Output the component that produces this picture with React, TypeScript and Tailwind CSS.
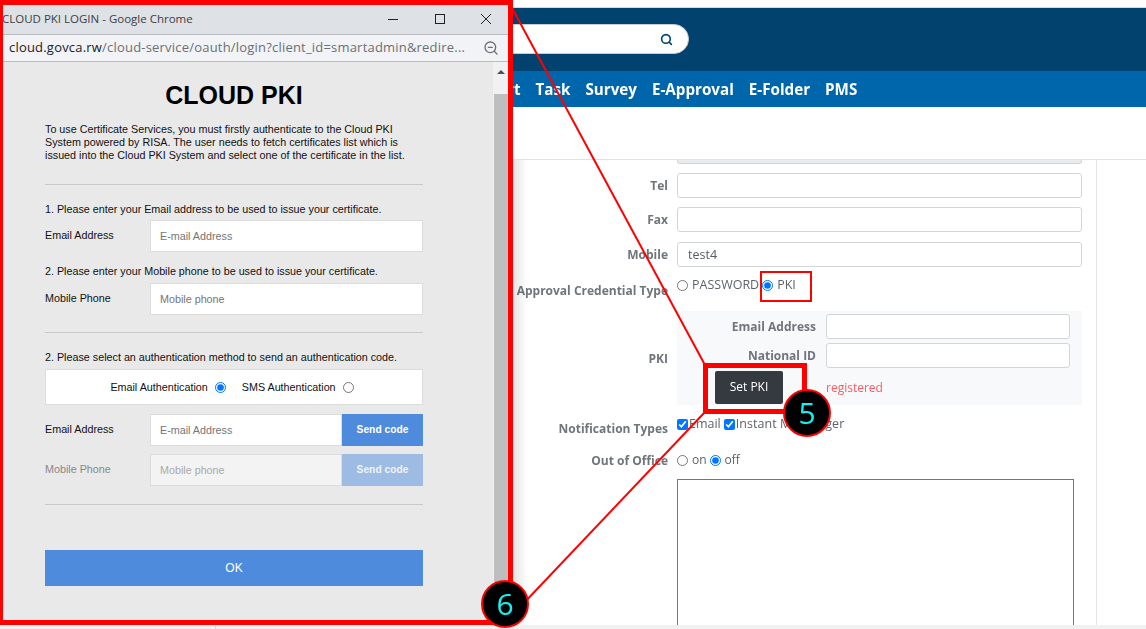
import { Search, ZoomOut } from "lucide-react";

const sans = "font-['Open_Sans',_'Noto_Sans',_sans-serif]";
const arial = "font-['Liberation_Sans',_Arial,_sans-serif]";

function Row({ label, className, labelClass = "", children }: { label: string; className: string; labelClass?: string; children?: React.ReactNode }) {
  return (
    <div className={`flex shrink-0 gap-[9px] ${className}`}>
      <div className={`w-[668px] shrink-0 text-right text-[12px] font-bold leading-[18px] text-[#6f757b] ${labelClass}`}>{label}</div>
      <div className="w-[405px] shrink-0 text-[12.5px] leading-[18px] text-[#5d6369]">{children}</div>
    </div>
  );
}

function Field({ value = "", className = "" }: { value?: string; className?: string }) {
  return (
    <div className={`h-[25px] rounded-[3px] border border-[#d3d6d9] bg-white px-[10px] text-[12.5px] leading-[23px] text-[#555c62] ${className}`}>
      {value}
    </div>
  );
}

function Background() {
  return (
    <div className={`flex h-[629px] w-[1146px] flex-col bg-white ${sans}`}>
      <div className="h-[8px] shrink-0 border-b border-[#d5d9dc] bg-white" />
      <header className="flex h-[63px] shrink-0 items-start justify-end bg-[#01426f] pr-[457px] pt-[16px]">
        <div className="flex h-[30px] w-[300px] items-center justify-end rounded-full border border-[#c6ccd2] bg-white pr-[15px]">
          <Search size={13} strokeWidth={3} className="text-[#01426f]" />
        </div>
      </header>
      <nav className="flex h-[36px] shrink-0 items-center gap-[15px] bg-[#0066ac] pl-[469px] text-[15.2px] font-bold text-white">
        <span>Report</span>
        <span>Task</span>
        <span>Survey</span>
        <span>E-Approval</span>
        <span>E-Folder</span>
        <span>PMS</span>
      </nav>
      <div className="h-[53px] shrink-0 border-b border-[#dfe2e5] bg-white" />
      <main className="relative min-h-0 flex-1 overflow-hidden">
        <div className="mr-[49px] flex h-full flex-col border-r border-[#e3e5e7]">
          <div className="ml-[677px] h-[4px] w-[405px] shrink-0 rounded-b-[3px] border border-t-0 border-[#d3d6d9] bg-[#e9ecef]" />
          <Row label="Tel" className="mt-[9px] items-center"><Field /></Row>
          <Row label="Fax" className="mt-[9px] items-center"><Field /></Row>
          <Row label="Mobile" className="mt-[10px] items-center"><Field value="test4" /></Row>
          <Row label="Approval Credential Type" labelClass="pt-[2px]" className="mt-[13px] h-[31px] items-start">
            <div className="-mt-[4px] flex items-center">
              <input type="radio" name="cred" readOnly className="m-0 mr-[4px] h-[11px] w-[11px]" />
              <span>PASSWORD</span>
              <input type="radio" name="cred" defaultChecked className="m-0 ml-[3px] mr-[4px] h-[11px] w-[11px]" />
              <span>PKI</span>
            </div>
          </Row>
          <Row label="PKI" labelClass="pt-[2px]" className="h-[94px] items-center">
            <div className="flex h-[94px] flex-col bg-[#f8f9fa] pt-[3px]">
              <div className="flex items-center gap-[10px] text-[12px]">
                <div className="w-[139px] text-right font-bold text-[#6f757b]">Email Address</div>
                <Field className="w-[244px]" />
              </div>
              <div className="mt-[4px] flex items-center gap-[10px] text-[12px]">
                <div className="w-[139px] text-right font-bold text-[#6f757b]">National ID</div>
                <Field className="w-[244px]" />
              </div>
              <div className="mt-[3px] flex items-center text-[12px]">
                <button className="ml-[38px] h-[33px] w-[68px] rounded-[2px] bg-[#343a40] pb-[2px] text-[12px] text-white">Set PKI</button>
                <span className="ml-[43px] text-[#ff5b66]">registered</span>
              </div>
            </div>
          </Row>
          <Row label="Notification Types" labelClass="pt-[1px]" className="mt-[14px] h-[18px] items-start">
            <div className="-mt-[4px] flex items-center">
              <input type="checkbox" defaultChecked className="m-0 h-[11px] w-[11px]" />
              <span className="ml-[1px]">Email</span>
              <input type="checkbox" defaultChecked className="m-0 ml-[3px] h-[11px] w-[11px]" />
              <span className="ml-[1px] tracking-[0.05px]">Instant Messenger</span>
            </div>
          </Row>
          <Row label="Out of Office" labelClass="pt-[1px]" className="mt-[14px] h-[19px] items-start">
            <div className="flex items-center text-[12px]">
              <input type="radio" name="office" readOnly className="m-0 mr-[4px] h-[11px] w-[11px]" />
              <span>on</span>
              <input type="radio" name="office" defaultChecked className="m-0 ml-[3px] mr-[4px] h-[11px] w-[11px]" />
              <span>off</span>
            </div>
          </Row>
          <div className="ml-[677px] mt-[9px] h-[200px] w-[397px] shrink-0 border border-[#767676] bg-white" />
        </div>
        <div className="absolute bottom-0 left-[215px] right-0 h-[4px] border-l border-[#d9d9d9] bg-[#f1f1f1]" />
        <div className="absolute bottom-0 left-0 h-[4px] w-[215px] bg-[#f1f1f1]" />
      </main>
    </div>
  );
}

function Popup() {
  const input = "h-[32px] border border-[#dcdcdc] bg-white pl-[9px] text-[10.75px] leading-[30px] text-[#757575]";
  const label = "w-[105px] shrink-0 text-[10.75px] leading-[13px] text-[#111]";
  return (
    <div className="absolute left-0 top-0 flex h-[625px] w-[513px] flex-col border-b-[5px] border-l-[3px] border-r-[5px] border-t-[5px] border-[#ff0000] bg-[#e9e9e9]">
      <div className={`flex h-[29px] shrink-0 items-center bg-[#dee1e6] pb-[2px] text-[11.5px] text-[#3c4043] ${sans}`}>
        <span className="ml-[-1px] flex-1 whitespace-nowrap">CLOUD PKI LOGIN - Google Chrome</span>
        <svg width="120" height="14" viewBox="0 0 120 14" className="shrink-0 text-[#222]" fill="none" stroke="currentColor" strokeWidth="1">
          <path d="M0 7.5H10" />
          <rect x="47.5" y="2.5" width="9" height="9" />
          <path d="M93 2L103 12M103 2L93 12" />
        </svg>
      </div>
      <div className={`flex h-[28px] shrink-0 items-center justify-between border-y border-[#b9bbbe] bg-[#f1f3f6] pl-[6px] pr-[9px] text-[13px] text-[#6c7074] ${sans}`}>
        <span className="w-[462px] overflow-hidden whitespace-nowrap tracking-[0.2px]">
          <span className="text-[#202124]">cloud.govca.rw</span>/cloud-service/oauth/login?client_id=smartadmin&amp;redire...
        </span>
        <ZoomOut size={16} strokeWidth={2} className="shrink-0 text-[#6c7074]" />
      </div>
      <div className="flex min-h-0 flex-1">
        <div className={`min-w-0 flex-1 pl-[42px] pr-[70px] ${arial}`}>
          <h1 className="mt-[17px] text-center text-[25px] font-bold leading-[33px] text-black">CLOUD PKI</h1>
          <p className="mt-[11px] whitespace-nowrap text-[10.75px] leading-[13px] text-[#111]">
            To use Certificate Services, you must firstly authenticate to the Cloud PKI
            <br />
            System powered by RISA. The user needs to fetch certificates list which is
            <br />
            issued into the Cloud PKI System and select one of the certificate in the list.
          </p>
          <hr className="mt-[22px] border-[#c9c9c9]" />
          <p className="mt-[18px] text-[10.75px] leading-[13px] text-[#111]">1. Please enter your Email address to be used to issue your certificate.</p>
          <div className="mt-[4px] flex">
            <div className={`${label} pt-[9px]`}>Email Address</div>
            <div className={`${input} flex-1`}>E-mail Address</div>
          </div>
          <p className="mt-[13px] text-[10.75px] leading-[13px] text-[#111]">2. Please enter your Mobile phone to be used to issue your certificate.</p>
          <div className="mt-[5px] flex">
            <div className={`${label} pt-[9px]`}>Mobile Phone</div>
            <div className={`${input} flex-1`}>Mobile phone</div>
          </div>
          <hr className="mt-[17px] border-[#c9c9c9]" />
          <p className="mt-[18px] text-[10.75px] leading-[13px] text-[#111]">2. Please select an authentication method to send an authentication code.</p>
          <div className="mt-[5px] flex h-[36px] items-center justify-center border border-[#dcdcdc] bg-white pr-[4px] text-[10.75px] text-[#111]">
            <span>Email Authentication</span>
            <input type="radio" name="auth" defaultChecked className="m-0 ml-[7px] h-[11px] w-[11px]" />
            <span className="ml-[16px]">SMS Authentication</span>
            <input type="radio" name="auth" readOnly className="m-0 ml-[7px] h-[11px] w-[11px]" />
          </div>
          <div className="mt-[9px] flex">
            <div className={`${label} pt-[9px]`}>Email Address</div>
            <div className={`${input} flex-1`}>E-mail Address</div>
            <button className="h-[32px] w-[81px] bg-[#4f8bdc] text-[10.25px] font-bold text-white">Send code</button>
          </div>
          <div className="mt-[8px] flex">
            <div className={`${label} pt-[9px] !text-[#888]`}>Mobile Phone</div>
            <div className={`${input} flex-1 !bg-[#f3f3f3] !text-[#aaa]`}>Mobile phone</div>
            <button className="h-[32px] w-[81px] bg-[#9dbbe3] text-[10.25px] font-bold text-[#eef3fa]">Send code</button>
          </div>
          <hr className="mt-[18px] border-[#c9c9c9]" />
          <button className="mt-[45px] h-[36px] w-full bg-[#4f8bdc] text-[12px] text-white">OK</button>
        </div>
        <div className="flex w-[15px] shrink-0 flex-col items-center bg-[#f1f1f1]">
          <div className="mt-[8px] h-0 w-0 border-x-[4px] border-b-[4px] border-x-transparent border-b-[#505050]" />
          <div className="mt-[20px] w-[14px] flex-1 bg-[#bebebe]" />
        </div>
      </div>
    </div>
  );
}

function Badge({ n, className }: { n: string; className: string }) {
  return (
    <div className={`absolute flex h-[48px] w-[48px] items-center justify-center rounded-full border-[2px] border-[#ff0000] bg-black text-[30px] leading-none text-[#14f0f0] ${sans} ${className}`}>
      {n}
    </div>
  );
}

export default function App() {
  return (
    <div className="relative h-[629px] w-[1146px] overflow-hidden bg-white">
      <Background />
      <div className="absolute left-[513px] top-[160px] h-[465px] w-[14px] bg-gradient-to-r from-[#e4e4e4] to-white mix-blend-multiply" />
      <Popup />
      <svg className="absolute left-0 top-0" width="1146" height="629" fill="none" stroke="#ff0000" strokeWidth="2">
        <path d="M511 6L705 365" />
        <path d="M705 412L522 605" />
      </svg>
      <div className="absolute left-[703px] top-[363px] h-[51px] w-[104px] border-[5px] border-[#ff0000]" />
      <div className="absolute left-[760px] top-[271px] h-[31px] w-[52px] border-[2px] border-[#ff0000]" />
      <Badge n="5" className="left-[783px] top-[389px]" />
      <Badge n="6" className="left-[481px] top-[580px]" />
    </div>
  );
}
